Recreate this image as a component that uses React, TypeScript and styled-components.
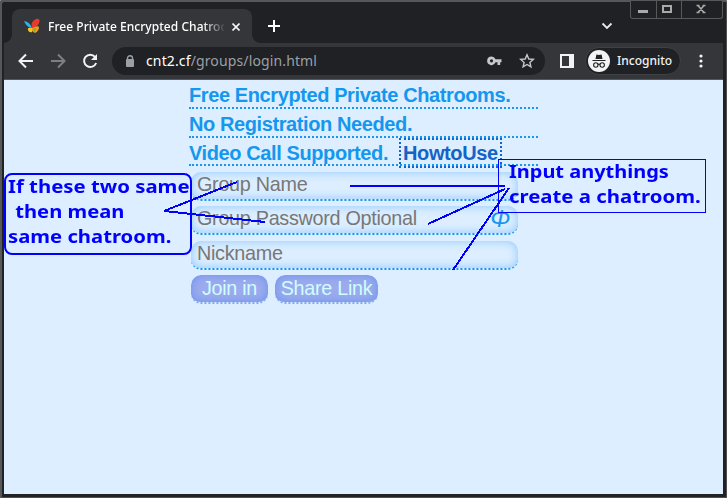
import React from "react";
import styled, { createGlobalStyle } from "styled-components";

const Global = createGlobalStyle`
  * { box-sizing: border-box; }
  html, body { margin: 0; background: #fff; overflow: hidden; }
  svg { display: block; flex: none; }
`;

const Window = styled.main`
  position: relative;
  display: flex;
  flex-direction: column;
  width: 727px;
  height: 498px;
  padding: 0 4px 4px;
  background: #202124;
  border-radius: 2px 2px 0 0;
  box-shadow: inset 2px 2px #555759, inset -1px -1px #514e51;
  overflow: hidden;
`;

const TitleBar = styled.header`
  display: flex;
  align-items: flex-start;
  height: 43px;
  padding: 9px 0 0 8px;
`;

const Tab = styled.div`
  position: relative;
  display: flex;
  align-items: center;
  width: 240px;
  height: 34px;
  padding-left: 12px;
  border-radius: 8px 8px 0 0;
  background: #35363a;
  &::before, &::after {
    content: "";
    position: absolute;
    bottom: 0;
    width: 8px;
    height: 8px;
  }
  &::before { left: -8px; background: radial-gradient(circle at 0 0, #202124 7.5px, #35363a 8px); }
  &::after { right: -8px; background: radial-gradient(circle at 100% 0, #202124 7.5px, #35363a 8px); }
`;

const TabTitle = styled.span`
  width: 176px;
  margin: 1px 0 0 8px;
  overflow: hidden;
  white-space: nowrap;
  font: 500 12px/18px "Noto Sans", sans-serif;
  letter-spacing: 0.04px;
  color: #fff;
  mask-image: linear-gradient(to right, #000 155px, transparent 178px);
`;

const TabClose = styled.span`margin: 1px 0 0 8px;`;
const NewTab = styled.span`margin: 10px 0 0 15px;`;
const TabSearch = styled.span`margin: 13px 0 0 320px;`;

const WindowControls = styled.div`
  position: absolute;
  top: 1px;
  right: 4px;
  display: grid;
  grid-template-columns: 25px 25px 42px;
  width: 93px;
  height: 18px;
  border: 1px solid #56585b;
  border-top: 0;
  border-radius: 0 0 3px 3px;
  background: #202124;
`;

const ControlCell = styled.span`
  display: flex;
  align-items: center;
  justify-content: center;
  padding-right: 2px;
  padding-bottom: 2px;
  & + & { padding-right: 4px; border-left: 1px solid #56585b; }
`;

const Toolbar = styled.nav`
  display: flex;
  align-items: center;
  height: 37px;
  padding: 0 0 1px 14px;
  background: #35363a;
  border-bottom: 1px solid #56575a;
`;

const NavIcons = styled.div`
  display: flex;
  gap: 16px;
  width: 94px;
`;

const AddressBar = styled.div`
  display: flex;
  align-items: center;
  width: 433px;
  height: 28px;
  padding: 0 10px 0 13px;
  border-radius: 14px;
  background: #202124;
`;

const Url = styled.span`
  flex: 1;
  margin-left: 11px;
  font: 14px/20px "Noto Sans", sans-serif;
  letter-spacing: 0.13px;
  white-space: nowrap;
  color: #9aa0a6;
  b { font-weight: 400; color: #fff; }
`;

const AddressActions = styled.span`
  display: flex;
  gap: 17px;
`;

const SidePanel = styled.span`margin-left: 15px;`;

const Profile = styled.div`
  display: flex;
  align-items: center;
  width: 96px;
  height: 28px;
  margin-left: 11px;
  padding-left: 2px;
  border: 1px solid #404145;
  border-radius: 14px;
  background: #202124;
  color: #f1f3f4;
  font: 500 12px/18px "Noto Sans", sans-serif;
  gap: 7px;
`;

const More = styled.span`margin-left: 18px;`;

const Page = styled.section`
  flex: 1;
  width: 719px;
  padding-left: 185px;
  background: #dceeff;
  font-family: "Liberation Sans", sans-serif;
`;

const Heading = styled.div<{ $height: number }>`
  width: 349px;
  height: ${(p) => p.$height}px;
  border-bottom: 2px dotted #1597ee;
  font-size: 20px;
  font-weight: 700;
  line-height: 30px;
  letter-spacing: -0.4px;
  white-space: nowrap;
  color: #1597ee;
`;

const HelpLink = styled.a`
  display: inline-block;
  height: 30px;
  margin-left: 11px;
  padding: 0 2px;
  border: 2px dotted #1463c8;
  line-height: 26px;
  vertical-align: top;
  color: #1463c8;
`;

const Form = styled.form`
  display: flex;
  flex-direction: column;
  gap: 5.4px;
  padding: 6px 0 0 2px;
`;

const Field = styled.label`
  display: flex;
  justify-content: space-between;
  width: 327px;
  height: 29px;
  padding: 0 8px 0 6px;
  border-bottom: 2px dotted #1597ee;
  border-radius: 10px;
  box-shadow: inset 0 0 10px #8dc7ff;
  font-size: 19.8px;
  line-height: 25px;
  letter-spacing: -0.29px;
  white-space: nowrap;
  color: #777;
`;

const Reveal = styled.span`
  color: #1597ee;
  font-size: 24px;
  font-style: italic;
`;

const Actions = styled.div`
  display: flex;
  gap: 7px;
`;

const Action = styled.button<{ $width: number }>`
  width: ${(p) => p.$width}px;
  height: 29px;
  padding: 0;
  border: 0;
  border-bottom: 2px dotted #86a8ee;
  border-radius: 10px;
  background: #9daaed padding-box;
  box-shadow: inset 0 0 10px #6795ed;
  font: 19.8px/25px "Liberation Sans", sans-serif;
  letter-spacing: -0.29px;
  white-space: nowrap;
  color: #ccffff;
`;

const Note = styled.aside<{ $left: number; $top: number; $width: number; $height: number; $rounded?: boolean }>`
  position: absolute;
  left: ${(p) => p.$left}px;
  top: ${(p) => p.$top}px;
  width: ${(p) => p.$width}px;
  height: ${(p) => p.$height}px;
  padding: ${(p) => (p.$rounded ? "0 0 0 2px" : "0 0 0 10px")};
  border: ${(p) => (p.$rounded ? 2 : 1)}px solid #00f;
  border-radius: ${(p) => (p.$rounded ? 8 : 0)}px;
  font: 700 18.5px/25px "Noto Sans", sans-serif;
  white-space: pre;
  color: #00f;
`;

const NoteLine = styled.div<{ $scale: number; $indent?: number }>`
  width: max-content;
  margin-top: -2px;
  margin-bottom: 2px;
  margin-left: ${(p) => p.$indent ?? 0}px;
  transform: scaleX(${(p) => p.$scale});
  transform-origin: 0 50%;
`;

const Pointers = styled.svg`
  position: absolute;
  inset: 0;
  pointer-events: none;
`;

const Butterfly = () => (
  <svg width="16" height="16" viewBox="0 0 16 16">
    <path d="M0 3Q6 4 8 10Q3 10 0 3Z" fill="#29b5ed" />
    <path d="M8 10Q6 4 12 1Q17 0 15 5Q14 9 8 10Z" fill="#e83a2b" />
    <path d="M8 10Q3 9 4 12Q5 15 8 14Z" fill="#f5c421" />
    <path d="M8 10Q14 7 15 9Q15 13 11 15L8 13Z" fill="#f29a1e" />
    <path d="M9 11L12 10L11 14Z" fill="#79ac31" />
  </svg>
);

const Arrow = ({ forward }: { forward?: boolean }) => (
  <svg width="16" height="16" viewBox="0 0 16 16" fill="none" stroke={forward ? "#7d7f83" : "#f1f3f4"} strokeWidth="2">
    <path d={forward ? "M1 8H14M8 1.5L14.5 8L8 14.5" : "M15 8H2M8 1.5L1.5 8L8 14.5"} />
  </svg>
);

const Reload = () => (
  <svg width="16" height="16" viewBox="0 0 16 16">
    <path d="M13 3.8A6.2 6.2 0 1 0 14.1 10" fill="none" stroke="#f1f3f4" strokeWidth="2" />
    <path d="M15 1V7H9Z" fill="#f1f3f4" />
  </svg>
);

const Lock = () => (
  <svg width="10" height="12" viewBox="0 0 10 12">
    <path d="M2.5 5V3a2.5 2.2 0 0 1 5 0V5" fill="none" stroke="#9aa0a6" strokeWidth="1.4" />
    <rect x="1" y="4" width="8" height="8" rx="1" fill="#9aa0a6" />
  </svg>
);

const Key = () => (
  <svg width="15" height="16" viewBox="0 -3 15 16">
    <path fillRule="evenodd" d="M4.5 0.5A4.3 4.3 0 0 1 8.5 3.3H14.5V6.3H13.2V9H10.5V6.3H8.5A4.3 4.3 0 1 1 4.5.5ZM4.5 3.2a1.6 1.6 0 1 0 0 3.2a1.6 1.6 0 0 0 0-3.2Z" fill="#c6c8ca" />
  </svg>
);

const Star = () => (
  <svg width="16" height="16" viewBox="0 0 16 16">
    <path d="M8 1.8L9.8 6L14.3 6.4L10.9 9.4L11.9 13.8L8 11.5L4.1 13.8L5.1 9.4L1.7 6.4L6.2 6Z" fill="none" stroke="#c6c8ca" strokeWidth="1.4" />
  </svg>
);

const Incognito = () => (
  <svg width="22" height="22" viewBox="0 0 22 22">
    <circle cx="11" cy="11" r="11" fill="#f1f3f4" />
    <path d="M7.5 9L8.4 4.5L11 5L13.6 4.5L14.5 9Z" fill="#202124" />
    <path d="M4.5 10.5H17.5" stroke="#202124" strokeWidth="1.2" />
    <g fill="none" stroke="#202124" strokeWidth="1.1">
      <circle cx="7.8" cy="15" r="2.2" /><circle cx="14.2" cy="15" r="2.2" /><path d="M10 14.5Q11 13.8 12 14.5" />
    </g>
  </svg>
);

export default function App() {
  return (
    <Window>
      <Global />
      <TitleBar>
        <Tab>
          <Butterfly />
          <TabTitle>Free Private Encrypted Chatrooms</TabTitle>
          <TabClose>
            <svg width="8" height="8" viewBox="0 0 8 8"><path d="M.5.5L7.5 7.5M7.5.5L.5 7.5" stroke="#f1f3f4" strokeWidth="1.6" /></svg>
          </TabClose>
        </Tab>
        <NewTab>
          <svg width="14" height="14" viewBox="0 0 14 14"><path d="M7 1V13M1 7H13" stroke="#fff" strokeWidth="2" /></svg>
        </NewTab>
        <TabSearch>
          <svg width="12" height="8" viewBox="0 0 12 8"><path d="M1.5 1.5L6 6L10.5 1.5" fill="none" stroke="#e8eaed" strokeWidth="1.8" /></svg>
        </TabSearch>
      </TitleBar>
      <WindowControls>
        <ControlCell><svg width="12" height="12" viewBox="0 0 12 12"><path d="M1 8.5H11" stroke="#aaa" strokeWidth="3" /></svg></ControlCell>
        <ControlCell><svg width="12" height="12" viewBox="0 0 12 12"><rect x="2" y="3" width="8" height="6" fill="none" stroke="#aaa" strokeWidth="2" /></svg></ControlCell>
        <ControlCell><svg width="12" height="12" viewBox="0 0 12 12"><path d="M3 2.5L9 9.5M9 2.5L3 9.5M1.5 2.5H4.5M7.5 2.5H10.5M1.5 9.5H4.5M7.5 9.5H10.5" stroke="#aaa" strokeWidth="1.6" /></svg></ControlCell>
      </WindowControls>
      <Toolbar>
        <NavIcons><Arrow /><Arrow forward /><Reload /></NavIcons>
        <AddressBar>
          <Lock />
          <Url><b>cnt2.cf</b>/groups/login.html</Url>
          <AddressActions><Key /><Star /></AddressActions>
        </AddressBar>
        <SidePanel>
          <svg width="14" height="14" viewBox="0 0 14 14"><path fillRule="evenodd" d="M0 0H14V14H0ZM2 2V12H9V2Z" fill="#f1f3f4" /></svg>
        </SidePanel>
        <Profile><Incognito />Incognito</Profile>
        <More>
          <svg width="4" height="14" viewBox="0 0 4 14" fill="#f1f3f4"><circle cx="2" cy="2" r="1.6" /><circle cx="2" cy="7" r="1.6" /><circle cx="2" cy="12" r="1.6" /></svg>
        </More>
      </Toolbar>
      <Page>
        <Heading $height={29}>Free Encrypted Private Chatrooms.</Heading>
        <Heading $height={29}>No Registration Needed.</Heading>
        <Heading $height={28}>Video Call Supported.<HelpLink>HowtoUse</HelpLink></Heading>
        <Form>
          <Field>Group Name</Field>
          <Field>Group Password Optional<Reveal>Φ</Reveal></Field>
          <Field>Nickname</Field>
          <Actions>
            <Action type="button" $width={77}>Join in</Action>
            <Action type="button" $width={103}>Share Link</Action>
          </Actions>
        </Form>
      </Page>
      <Note $left={4} $top={173} $width={188} $height={82} $rounded>
        <NoteLine $scale={1.1}>If these two same</NoteLine>
        <NoteLine $scale={1.09} $indent={2}> then mean</NoteLine>
        <NoteLine $scale={1.095}>same chatroom.</NoteLine>
      </Note>
      <Note $left={498} $top={159} $width={208} $height={54}>
        <NoteLine $scale={1.08}>Input anythings</NoteLine>
        <NoteLine $scale={1.1}>create a chatroom.</NoteLine>
      </Note>
      <Pointers width="727" height="498" viewBox="0 0 727 498" fill="none" stroke="#00f" strokeWidth="2" shapeRendering="crispEdges">
        <path d="M237 182L164 211L265 222M350 186H505M505 189L428 224M509 188L453 270" />
      </Pointers>
    </Window>
  );
}
